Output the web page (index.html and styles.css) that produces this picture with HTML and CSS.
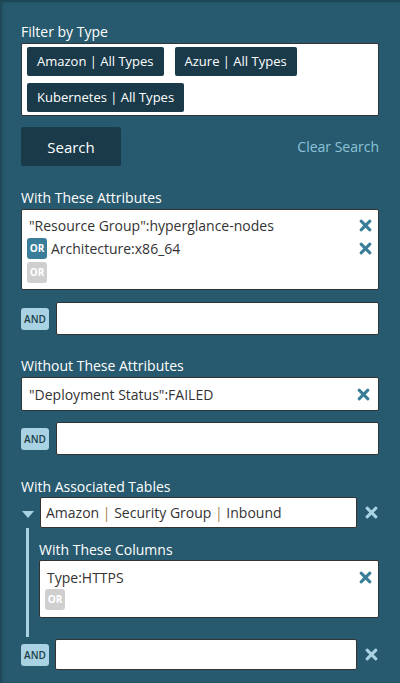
FILE: index.html
```html
<!DOCTYPE html>
<html>
<head>
<meta charset="utf-8">
<link rel="stylesheet" href="styles.css">
</head>
<body>
<div class="panel">
  <div class="label first">Filter by Type</div>
  <div class="box chips">
    <span class="chip">Amazon | All Types</span>
    <span class="chip">Azure | All Types</span>
    <span class="chip">Kubernetes | All Types</span>
  </div>
  <div class="actions">
    <button class="search">Search</button>
    <a class="clear">Clear Search</a>
  </div>

  <div class="label l-with">With These Attributes</div>
  <div class="box list">
    <div class="row"><span class="val">"Resource Group":hyperglance-nodes</span><span class="x"></span></div>
    <div class="row"><span class="or on">OR</span><span class="val">Architecture:x86_64</span><span class="x"></span></div>
    <div class="row"><span class="or">OR</span></div>
  </div>
  <div class="androw">
    <span class="and">AND</span>
    <div class="input"></div>
  </div>

  <div class="label l-without">Without These Attributes</div>
  <div class="box single">
    <span class="val">"Deployment Status":FAILED</span><span class="x"></span>
  </div>
  <div class="androw">
    <span class="and">AND</span>
    <div class="input"></div>
  </div>

  <div class="label l-assoc">With Associated Tables</div>
  <div class="assoc">
    <div class="tablerow">
      <span class="tri"></span>
      <div class="input table">Amazon <span class="pipe">|</span> Security Group <span class="pipe">|</span> Inbound</div>
      <span class="x light"></span>
    </div>
    <div class="tree">
      <div class="label sub">With These Columns</div>
      <div class="box list cols">
        <div class="row"><span class="val">Type:HTTPS</span><span class="x"></span></div>
        <div class="row"><span class="or">OR</span></div>
      </div>
    </div>
    <div class="androw last">
      <span class="and">AND</span>
      <div class="input"></div>
      <span class="x light"></span>
    </div>
  </div>
</div>
</body>
</html>
```
FILE: styles.css
```css
* { box-sizing: border-box; }
html, body { margin: 0; padding: 0; }
body {
  width: 400px;
  height: 683px;
  background: #275a6e;
  font-family: "Open Sans", "Noto Sans", sans-serif;
  overflow: hidden;
}
.panel {
  height: 683px;
  padding: 0 21px 0 21px;
  border-top: 2px solid #1d4656;
  box-shadow: inset 3px 0 4px -2px rgba(0,0,0,0.35);
}
.label {
  color: #fff;
  font-size: 14px;
  line-height: 19px;
  margin-top: 19px;
  margin-bottom: 2px;
}
.label.first { margin-top: 20px; margin-bottom: 2px; }
.label.l-with { margin-top: 22px; }
.label.l-without { margin-top: 21px; }
.label.l-assoc { margin-top: 22px; margin-bottom: 1px; }
.box {
  background: #fff;
  border: 1px solid #333;
  border-radius: 2px;
}
.chips {
  display: flex;
  flex-wrap: wrap;
  gap: 7px 11px;
  padding: 3px 5px;
  height: 73px;
  align-content: flex-start;
}
.chip {
  background: #1a3a4a;
  color: #fff;
  font-size: 13px;
  line-height: 29px;
  height: 29px;
  padding: 0 10px;
  border-radius: 2px;
}
.actions {
  display: flex;
  align-items: center;
  justify-content: space-between;
  margin-top: 11px;
}
.search {
  width: 100px;
  height: 39px;
  background: #1a3a4a;
  color: #fff;
  border: none;
  border-radius: 2px;
  font-family: inherit;
  font-size: 15px;
  padding: 0;
}
.clear {
  color: #8cc3da;
  font-size: 14px;
}
.list { padding: 5px 5px 6px 5px; }
.row {
  display: flex;
  align-items: center;
  min-height: 21px;
  margin-bottom: 2px;
}
.row:nth-child(2) { margin-bottom: 3px; }
.row:last-child { margin-bottom: 0; }
.row:first-child .val { padding-left: 2px; }
.val {
  color: #333;
  font-size: 14px;
  line-height: 19px;
  flex: 1;
}
.or {
  width: 20px;
  height: 21px;
  border-radius: 3px;
  background: #cfcfcf;
  color: #fff;
  font-size: 10px;
  font-weight: 700;
  line-height: 21px;
  text-align: center;
  margin-right: 4px;
}
.or.on { background: #3a7d98; }
.x {
  width: 13px;
  height: 13px;
  position: relative;
  margin-right: 1px;
  flex: none;
}
.x::before, .x::after {
  content: "";
  position: absolute;
  left: 5px;
  top: -1px;
  width: 3px;
  height: 15px;
  background: #3a7d98;
  border-radius: 1px;
}
.x::before { transform: rotate(45deg); }
.x::after { transform: rotate(-45deg); }
.x.light::before, .x.light::after { background: #a9d3e3; }
.androw {
  display: flex;
  align-items: center;
  gap: 7px;
  margin-top: 12px;
}
.and {
  width: 28px;
  height: 22px;
  border-radius: 3px;
  background: #a9d3e3;
  color: #1d3d4b;
  font-size: 10px;
  font-weight: 600;
  line-height: 22px;
  text-align: center;
  flex: none;
}
.input {
  flex: 1;
  height: 33px;
  background: #fff;
  border: 1px solid #333;
  border-radius: 2px;
}
.single {
  display: flex;
  align-items: center;
  height: 34px;
  padding: 0 7px 0 7px;
}
.single + .androw { margin-top: 11px; }
.tablerow {
  display: flex;
  align-items: center;
}
.tri {
  width: 0;
  height: 0;
  border-left: 6px solid transparent;
  border-right: 6px solid transparent;
  border-top: 7px solid #a9d3e3;
  margin: 3px 6px 0 1px;
  flex: none;
}
.input.table {
  height: 31px;
  color: #333;
  font-size: 14px;
  line-height: 29px;
  padding-left: 5px;
}
.pipe { color: #a8804f; }
.tablerow .x { margin-left: 8px; margin-right: 1px; }
.tree {
  margin-left: 5px;
  border-left: 3px solid #a9d3e3;
  padding: 1px 0 19px 10px;
}
.label.sub { margin-top: 11px; margin-bottom: 1px; }
.cols { padding: 6px 5px 6px 5px; height: 58px; }
.cols .row:first-child { margin-bottom: 1px; }
.androw.last { margin-top: 2px; gap: 6px; }
.androw.last .input { height: 31px; }
.androw.last .x { margin-left: 2px; }
```
